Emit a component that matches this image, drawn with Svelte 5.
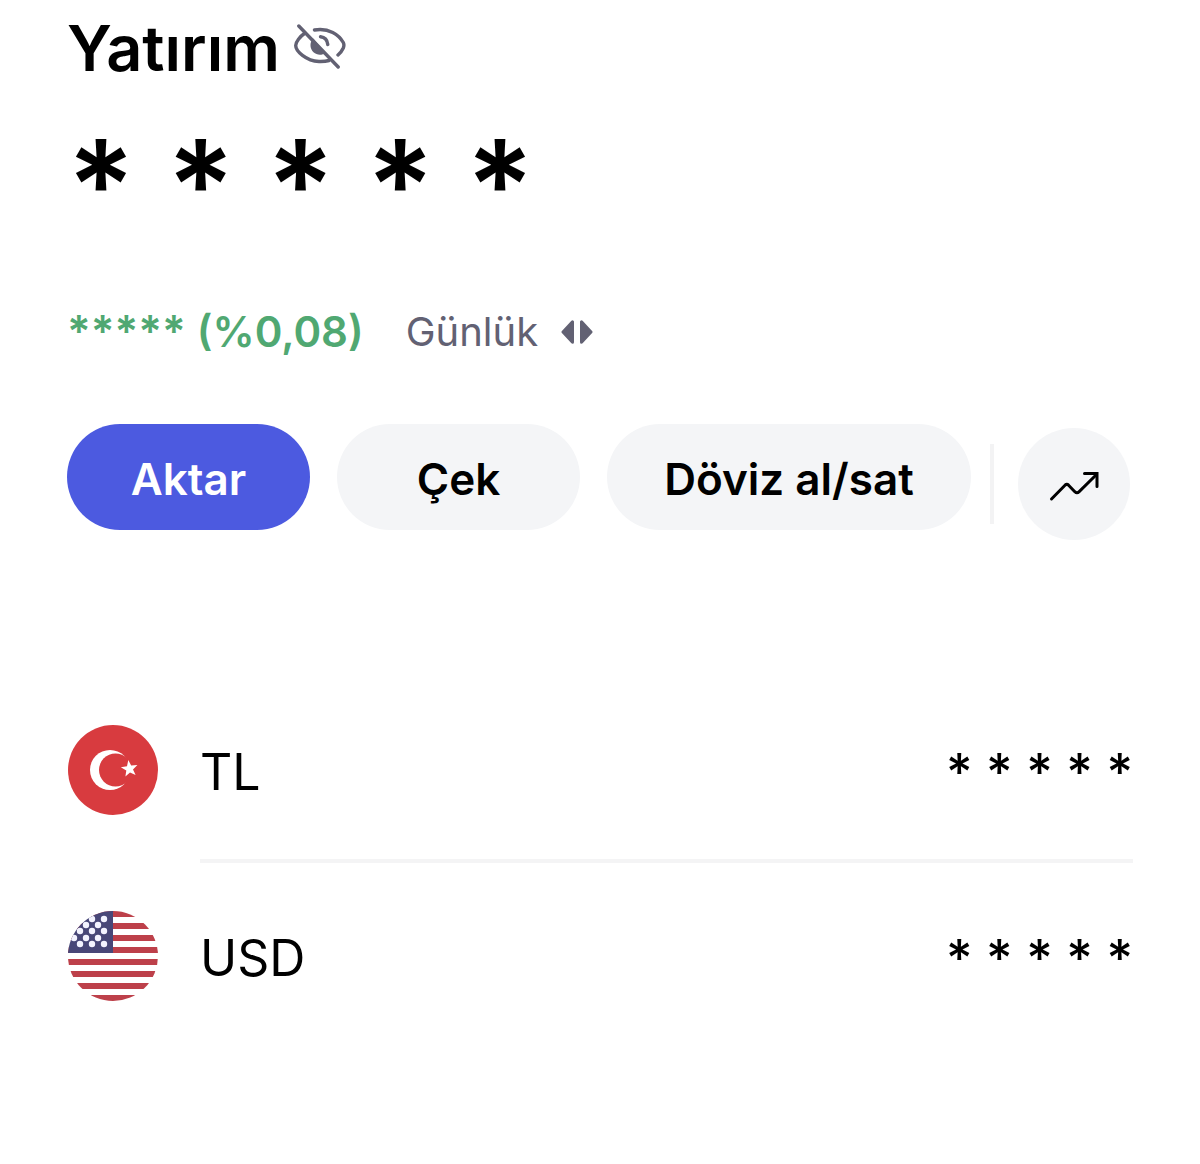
<script>
  const mask = '* * * * *';
  const accounts = [
    { code: 'TL', flag: 'tr', amount: mask },
    { code: 'USD', flag: 'us', amount: mask }
  ];
  const stripes = [0, 12, 24, 36, 48, 60, 72, 84];
  const stars = [
    [24, 8], [36, 8],
    [18, 14], [30, 14],
    [12, 20], [24, 20], [36, 20],
    [6, 27], [18, 27], [30, 27],
    [12, 33], [24, 33], [36, 33]
  ];
</script>

<main>
  <header>
    <h1>Yatırım</h1>
    <button class="plain" aria-label="Tutarları göster">
      <svg width="52" height="46" viewBox="0 0 52 46" fill="none" stroke="#626173" stroke-width="3.400" stroke-linecap="round" stroke-linejoin="round">
        <path d="M11 9C6 12.500 1.700 18 1.700 21.500C1.700 27 12 37 25 37.500Q31 37.700 35 36.500" />
        <path d="M20.500 6C35 3.500 45 11 49.300 18.500Q50.500 21 49.300 24Q47.500 28 44 31" />
        <path d="M26.500 12.800Q33 13.500 33.800 20.500" />
        <path d="M19.300 14.500C15.500 18 15.500 24.500 19.500 28.300C22.700 31.300 27.500 31.500 31.500 29.300Z" fill="#626173" stroke="none" />
        <path d="M4.800 2L44.200 43" />
      </svg>
    </button>
  </header>

  <p class="balance">{mask}</p>

  <div class="change">
    <strong>***** <span class="percent">(%0,08)</span></strong>
    <button class="plain period">
      Günlük
      <svg width="32" height="26" viewBox="0 0 32 26" fill="#626173" stroke="#626173" stroke-width="3" stroke-linejoin="round" aria-hidden="true">
        <path d="M11.500 2.800V23.200L2 13Z" />
        <path d="M20.500 2.800V23.200L30 13Z" />
      </svg>
    </button>
  </div>

  <div class="actions">
    <button class="pill primary">Aktar</button>
    <button class="pill">Çek</button>
    <button class="pill wide">Döviz al/sat</button>
    <span class="divider"></span>
    <button class="round" aria-label="Grafik">
      <svg width="50" height="32" viewBox="0 0 50 32" fill="none" stroke="#000" stroke-width="3" stroke-linecap="round">
        <path d="M2.500 29L16 15.200Q17.800 13.500 19.600 15.200L25.800 21.700Q28 23.800 30.200 21.700L47.500 4.500" />
        <path d="M35.500 3.500H48V16.500" stroke-linejoin="miter" />
      </svg>
    </button>
  </div>

  <ul>
    {#each accounts as account}
      <li>
        {#if account.flag === 'tr'}
          <svg class="flag" viewBox="0 0 90 90" aria-hidden="true">
            <circle cx="45" cy="45" r="45" fill="#d83b3f" />
            <circle cx="42" cy="45" r="20" fill="#fff" />
            <circle cx="47.500" cy="45" r="16.500" fill="#d83b3f" />
            <path fill="#fff" d="M60.300 35.100L63.200 40.600L69.400 39.900L65 44.400L67.600 50.100L62 47.400L57.400 51.600L58.300 45.400L52.800 42.300L59 41.200Z" />
          </svg>
        {:else}
          <svg class="flag" viewBox="0 0 90 90" aria-hidden="true">
            <clipPath id="disc"><circle cx="45" cy="45" r="45" /></clipPath>
            <g clip-path="url(#disc)">
              <rect width="90" height="90" fill="#fff" />
              {#each stripes as y}
                <rect {y} width="90" height="6" fill="#bd404a" />
              {/each}
              <rect width="45" height="42" fill="#484778" />
              {#each stars as [cx, cy]}
                <circle {cx} {cy} r="3.200" fill="#f3f3ff" />
              {/each}
            </g>
          </svg>
        {/if}
        <div class="line">
          <span>{account.code}</span>
          <span class="amount">{account.amount}</span>
        </div>
      </li>
    {/each}
  </ul>
</main>

<style>
  :global(body) {
    margin: 0;
    background: #fff;
  }
  main {
    box-sizing: border-box;
    padding: 8px 67px 64px;
    font-family: Inter, 'Liberation Sans', sans-serif;
    color: #000;
  }
  button {
    border: 0;
    font: inherit;
    color: inherit;
    cursor: pointer;
    padding: 0;
  }
  svg {
    display: block;
    flex: none;
  }
  .plain {
    background: none;
  }
  header {
    display: flex;
    align-items: center;
    gap: 14px;
  }
  header svg {
    margin-bottom: 2px;
  }
  h1 {
    margin: 0;
    font-size: 63px;
    line-height: 80px;
    font-weight: 600;
  }
  .balance {
    margin: 25px 0 0;
    font-size: 126px;
    line-height: 144px;
    font-weight: 600;
  }
  .change {
    display: flex;
    flex-wrap: wrap;
    align-items: center;
    gap: 42px;
    margin-top: 46px;
    line-height: 56px;
  }
  strong {
    font-size: 44px;
    font-weight: 600;
    color: #50a872;
  }
  .percent {
    font-size: 42px;
  }
  .period {
    display: flex;
    align-items: center;
    gap: 23px;
    font-size: 40px;
    color: #626173;
  }
  .actions {
    display: flex;
    align-items: flex-start;
    margin-top: 64px;
    gap: 27px;
  }
  .pill {
    min-width: 243px;
    height: 106px;
    padding: 3px 16px 0;
    border-radius: 53px;
    background: #f4f5f7;
    font-size: 44px;
    font-weight: 600;
    white-space: nowrap;
  }
  .primary {
    background: #4c5ae0;
    color: #fff;
  }
  .wide {
    min-width: 364px;
  }
  .divider {
    width: 4px;
    height: 80px;
    margin: 20px -3px 0 -8px;
    background: #f3f3f4;
  }
  .round {
    display: grid;
    place-items: center;
    width: 112px;
    height: 112px;
    margin-top: 4px;
    padding-top: 3px;
    border-radius: 50%;
    background: #f4f5f7;
  }
  ul {
    list-style: none;
    margin: 137px 0 0;
    padding: 0 0 0 1px;
  }
  li {
    display: flex;
    align-items: center;
    gap: 42px;
  }
  .flag {
    width: 90px;
    height: 90px;
  }
  .line {
    flex: 1;
    display: flex;
    justify-content: space-between;
    align-items: center;
    padding: 52px 0 44px;
    border-bottom: 4px solid #f4f4f5;
    font-size: 50px;
    line-height: 86px;
  }
  li:last-child .line {
    border-color: transparent;
  }
  .amount {
    font-size: 51px;
    font-weight: 500;
  }
</style>
